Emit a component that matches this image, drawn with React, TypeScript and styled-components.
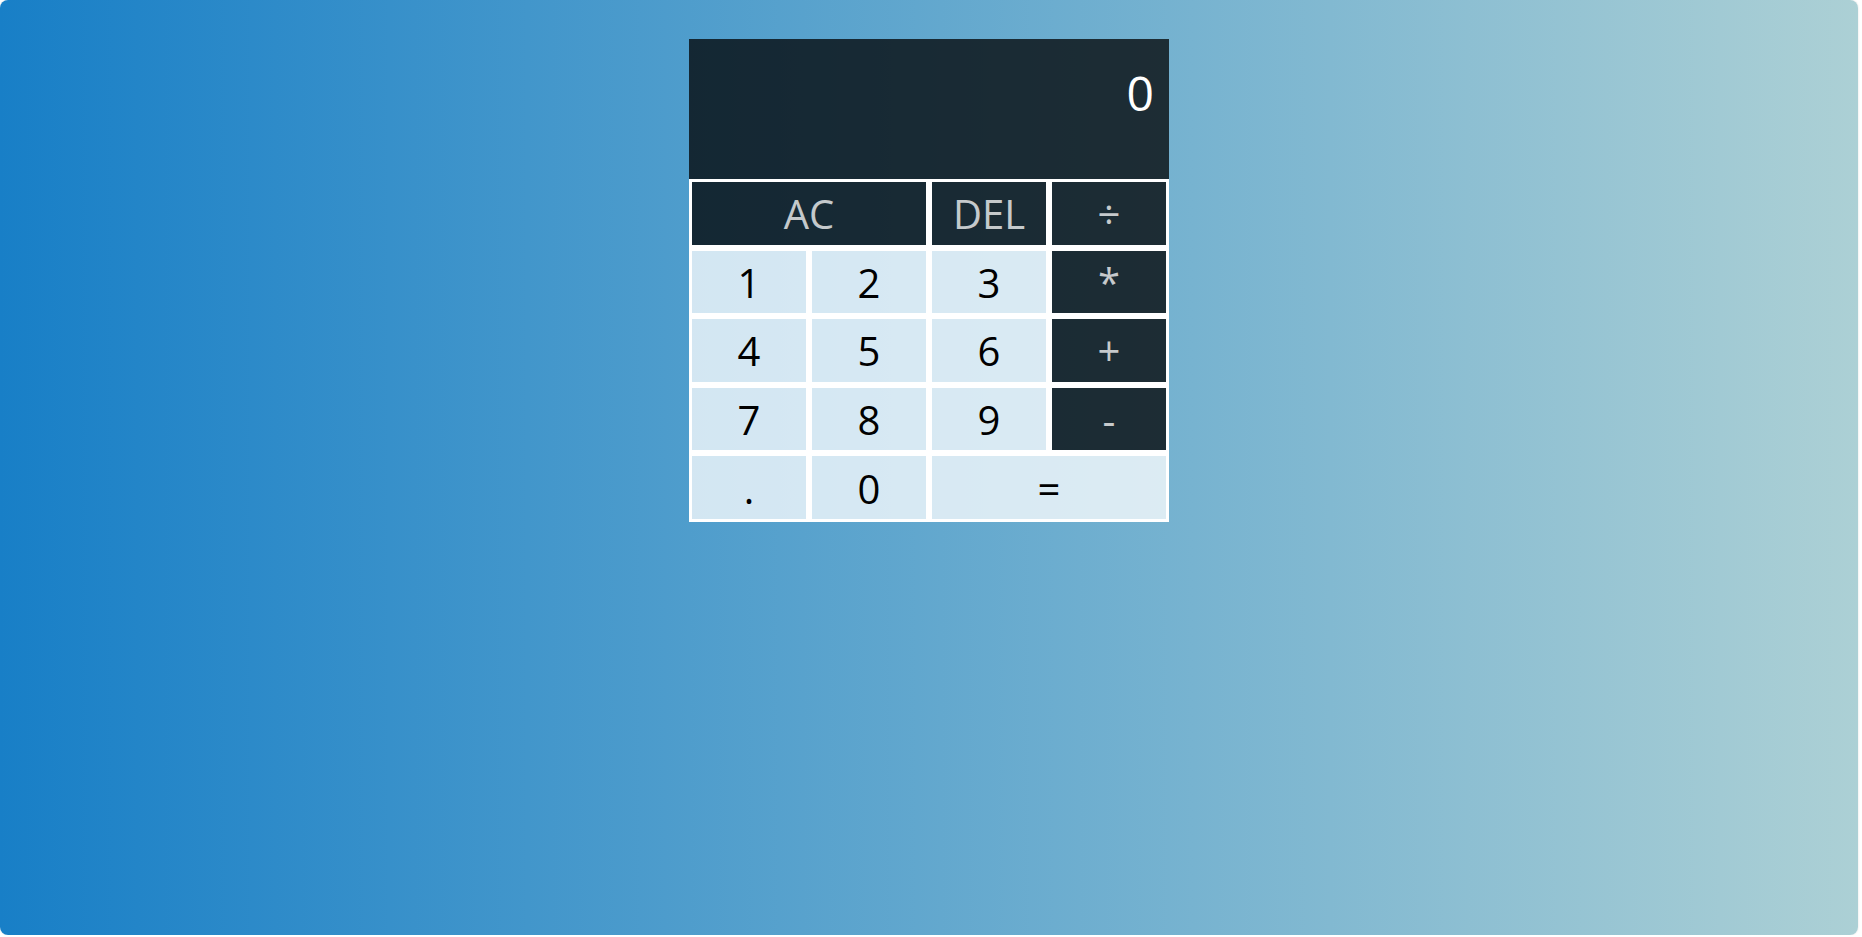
import React from "react";
import styled, { createGlobalStyle } from "styled-components";

const GlobalStyle = createGlobalStyle`
  *, *::before, *::after { box-sizing: border-box; }
  html, body { margin: 0; padding: 0; background: #ffffff; }
  body { font-family: "Open Sans", "Noto Sans", sans-serif; }
`;

const Page = styled.div`
  width: calc(100vw - 4px);
  height: calc(100vh - 2px);
  border-radius: 8px;
  background: linear-gradient(to right, #187fc7, #acd0d5);
  box-shadow: 0 0 2px rgba(0, 0, 0, 0.15);
  display: flex;
  justify-content: center;
  align-items: flex-start;
  padding-top: 39px;
`;

const Grid = styled.div`
  display: grid;
  grid-template-columns: repeat(4, 120px);
  grid-template-rows: 140px repeat(5, 68.6px);
`;

const Output = styled.div`
  grid-column: 1 / -1;
  background-color: rgba(0, 0, 0, 0.75);
  display: flex;
  flex-direction: column;
  align-items: flex-end;
  padding: 21px 15px 0 16px;
`;

const Current = styled.div`
  color: #ffffff;
  font-size: 48px;
  line-height: 1.36;
`;

const Key = styled.button<{ $dark?: boolean; $span?: number }>`
  grid-column: span ${(p) => p.$span ?? 1};
  font-family: "Open Sans", "Noto Sans", sans-serif;
  font-size: 40px;
  font-weight: normal;
  line-height: 1;
  padding: 2px 0 0 0;
  border: 3px solid #ffffff;
  outline: none;
  cursor: pointer;
  background-color: ${(p) => (p.$dark ? "rgba(0, 0, 0, 0.75)" : "rgba(255, 255, 255, 0.75)")};
  color: ${(p) => (p.$dark ? "rgba(255, 255, 255, 0.75)" : "#000000")};
  display: flex;
  align-items: center;
  justify-content: center;
`;

export default function App() {
  return (
    <>
      <GlobalStyle />
      <Page>
        <Grid>
          <Output>
            <Current>0</Current>
          </Output>
          <Key $dark $span={2}>AC</Key>
          <Key $dark>DEL</Key>
          <Key $dark>÷</Key>
          <Key>1</Key>
          <Key>2</Key>
          <Key>3</Key>
          <Key $dark>*</Key>
          <Key>4</Key>
          <Key>5</Key>
          <Key>6</Key>
          <Key $dark>+</Key>
          <Key>7</Key>
          <Key>8</Key>
          <Key>9</Key>
          <Key $dark>-</Key>
          <Key>.</Key>
          <Key>0</Key>
          <Key $span={2}>=</Key>
        </Grid>
      </Page>
    </>
  );
}
